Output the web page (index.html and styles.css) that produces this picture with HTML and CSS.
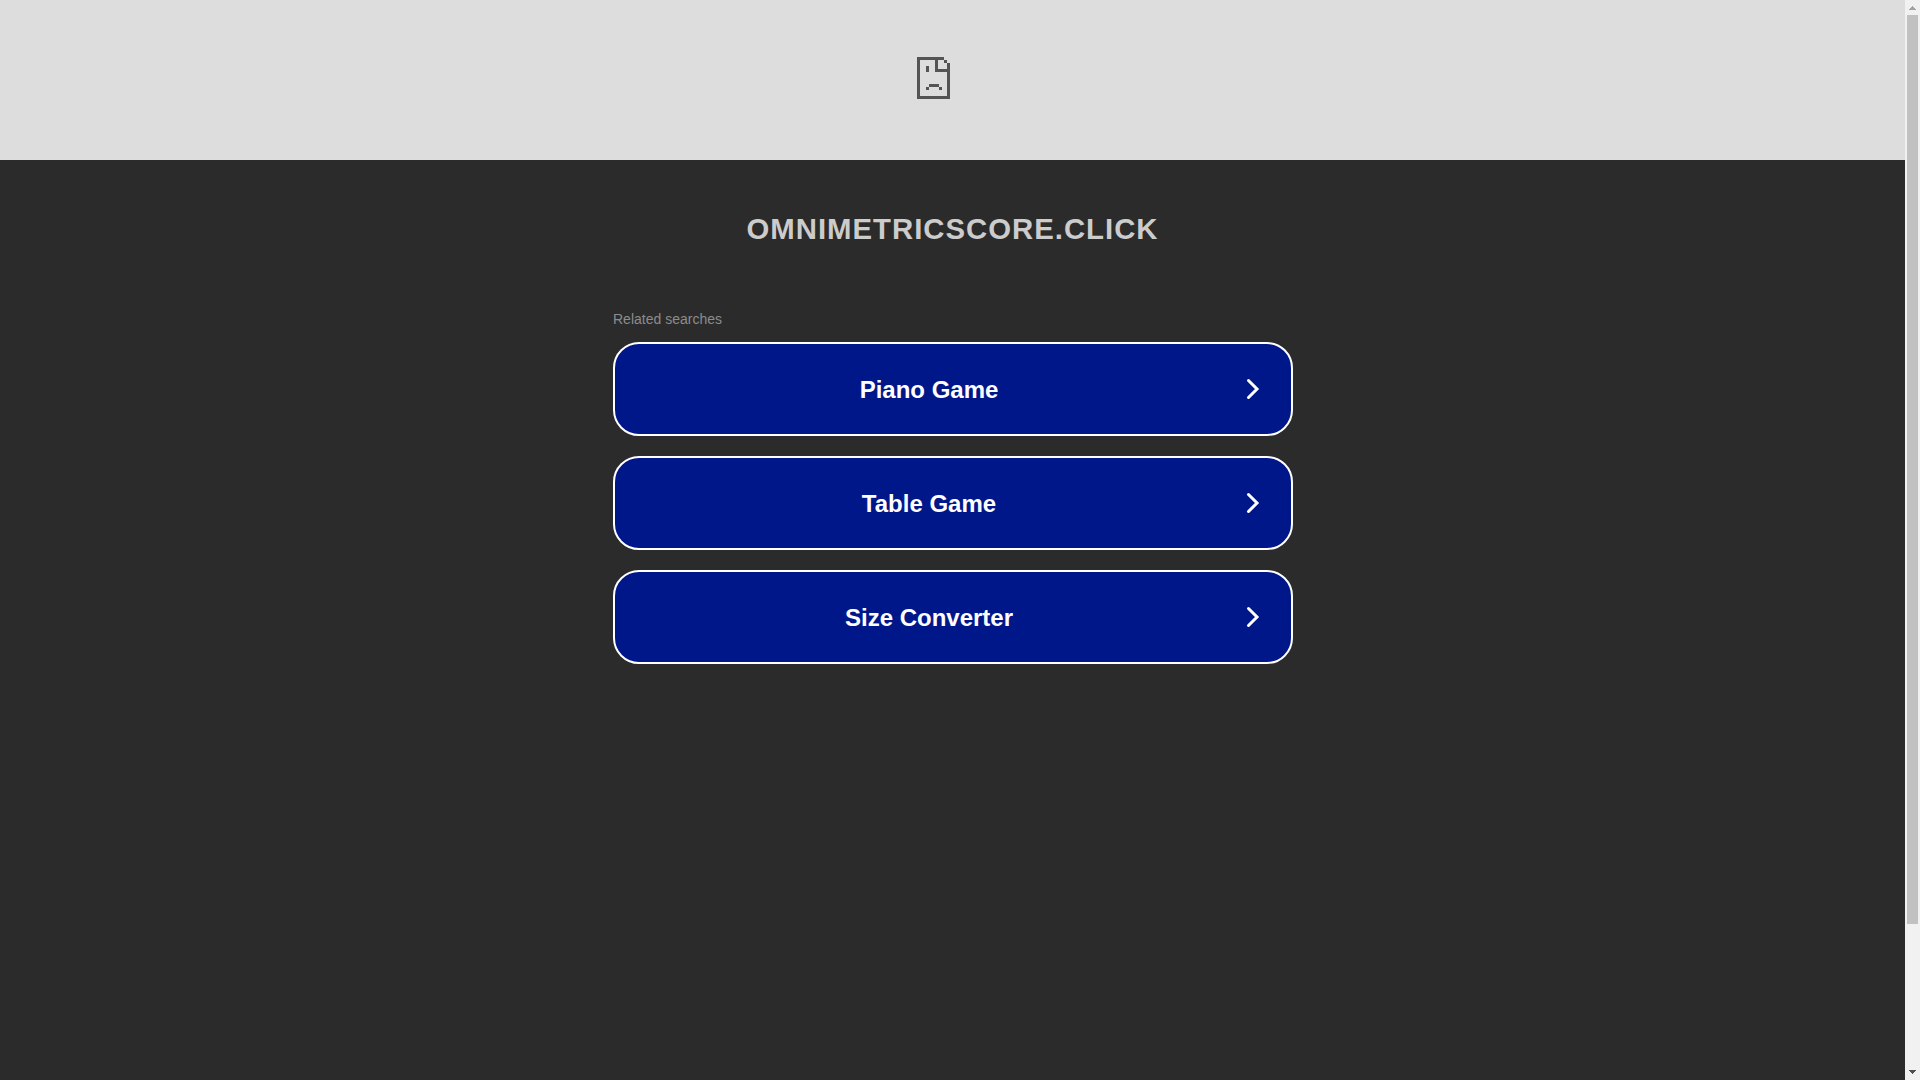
FILE: index.html
```html
<!DOCTYPE html>
<html lang="en">
<head>
    <meta charset="utf-8">
    <title>omnimetricscore.click</title>
    <meta name="viewport" content="width=device-width, initial-scale=1.0">
    <link rel="stylesheet" href="styles.css">
</head>
<body>
    <div class="page">
        <!-- Top banner -->
        <div class="banner">
            <svg class="sad-page" width="33" height="42" viewBox="0 0 33 42" shape-rendering="crispEdges">
                <path d="M0 0H27V3H30V6H33V42H0ZM3 3V39H30V15H18V3ZM21 3V12H30V6H27V3Z" fill-rule="evenodd"/>
                <path d="M9 9h3v6h-3zM12 27h10v3h-10zM9 30h3v3h-3zM22 30h3v3h-3z"/>
            </svg>
        </div>

        <h1 class="domain">omnimetricscore.click</h1>

        <!-- Related searches -->
        <div class="searches">
            <p class="label">Related searches</p>
            <a class="search" href="#">
                <span class="name">Piano Game</span>
                <svg class="arrow" width="16" height="24" viewBox="0 0 16 24"><path d="M3.5 3.5L12 12L3.5 20.5"/></svg>
            </a>
            <a class="search" href="#">
                <span class="name">Table Game</span>
                <svg class="arrow" width="16" height="24" viewBox="0 0 16 24"><path d="M3.5 3.5L12 12L3.5 20.5"/></svg>
            </a>
            <a class="search" href="#">
                <span class="name">Size Converter</span>
                <svg class="arrow" width="16" height="24" viewBox="0 0 16 24"><path d="M3.5 3.5L12 12L3.5 20.5"/></svg>
            </a>
        </div>
    </div>

    <!-- Scrollbar -->
    <div class="scrollbar">
        <svg class="up" width="7" height="4" viewBox="0 0 7 4" shape-rendering="crispEdges"><path d="M3 0h1v1h1v1h1v1h1v1h-7v-1h1v-1h1v-1h1z"/></svg>
        <div class="thumb"></div>
        <svg class="down" width="7" height="4" viewBox="0 0 7 4" shape-rendering="crispEdges"><path d="M0 0h7v1h-1v1h-1v1h-1v1h-1v-1h-1v-1h-1v-1h-1z"/></svg>
    </div>
</body>
</html>
```

FILE: styles.css
```css
body {
    margin: 0;
    height: 100vh;
    display: flex;
    overflow: hidden;
    background: #2b2b2b;
    font-family: Arial, "Liberation Sans", sans-serif;
}

.page {
    flex: 1;
}

/* Banner */
.banner {
    height: 160px;
    box-sizing: border-box;
    padding: 57px 38px 0 0;
    background: #ddd;
    text-align: center;
}

.sad-page {
    display: block;
    margin: 0 auto;
    fill: #545454;
}

.domain {
    margin: 52px 0 0;
    font-size: 22pt;
    line-height: 34px;
    letter-spacing: 1px;
    text-align: center;
    text-transform: uppercase;
    color: #ccc;
}

/* Related searches */
.searches {
    width: 680px;
    margin: 65px auto 0;
    position: relative;
    left: 0.5px;
}

.label {
    margin: 0 0 15px;
    font-size: 14px;
    line-height: 16px;
    color: #8c8c8c;
}

.search {
    display: flex;
    align-items: center;
    box-sizing: border-box;
    height: 94px;
    margin-bottom: 20px;
    padding: 0 30px 0 0;
    border: 2px solid #fff;
    border-radius: 26px;
    background: #00178a;
    color: #fff;
    font-size: 24px;
    font-weight: bold;
    text-decoration: none;
}

.name {
    flex: 1;
    margin-right: 2px;
    padding-top: 2px;
    text-align: center;
}

.arrow {
    fill: none;
    stroke: #fff;
    stroke-width: 3;
    stroke-linecap: round;
}

/* Scrollbar */
.scrollbar {
    width: 15px;
    display: flex;
    flex-direction: column;
    align-items: center;
    box-sizing: border-box;
    padding: 6px 0;
    background: #f1f1f1;
}

.thumb {
    width: 11px;
    height: 909px;
    margin-top: 5px;
    background: #c1c1c1;
}

.up {
    fill: #a3a3a3;
}

.down {
    margin-top: auto;
    fill: #505050;
}
```
